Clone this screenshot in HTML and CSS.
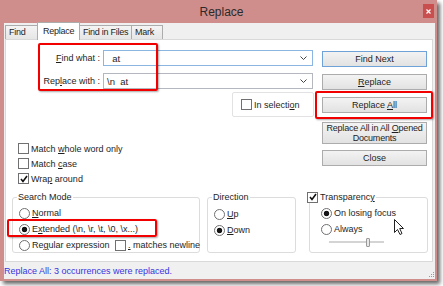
FILE: index.html
```html
<!DOCTYPE html>
<html lang="en">
<head>
    <meta charset="UTF-8">
    <meta name="viewport" content="width=device-width, initial-scale=1.0">
    <title>Replace</title>
    <link rel="stylesheet" href="styles.css">
</head>
<body>
    <div class="screen">
        <div class="window">
            <div class="titlebar">
                <span></span>
                <span class="title">Replace</span>
                <span class="close">
                    <svg width="5" height="5" viewBox="0 0 5 5"><path d="M0.5 0.5 L4.5 4.5 M4.5 0.5 L0.5 4.5" stroke="#fff" stroke-width="1.2"/></svg>
                </span>
            </div>

            <div class="client">
                <div class="tabs">
                    <div class="tab tab-find">Find</div>
                    <div class="tab tab-replace active">Replace</div>
                    <div class="tab tab-files">Find in Files</div>
                    <div class="tab tab-mark">Mark</div>
                </div>

                <div class="page">
                    <div class="top">
                        <div class="left">
                            <div class="fields">
                                <label class="field-label"><u>F</u>ind what :</label>
                                <div class="combo focused">
                                    <span class="combo-text">  at</span>
                                    <svg width="7" height="4" viewBox="0 0 7 4"><path d="M0.5 0.5 L3.5 3.5 L6.5 0.5" stroke="#444" fill="none"/></svg>
                                </div>
                                <label class="field-label">Rep<u>l</u>ace with :</label>
                                <div class="combo">
                                    <span class="combo-text">\n  at</span>
                                    <svg width="7" height="4" viewBox="0 0 7 4"><path d="M0.5 0.5 L3.5 3.5 L6.5 0.5" stroke="#444" fill="none"/></svg>
                                </div>
                            </div>

                            <div class="selbox">
                                <div class="opt">
                                    <span class="box"></span>
                                    <span>In selecti<u>o</u>n</span>
                                </div>
                            </div>

                            <div class="options">
                                <div class="opt">
                                    <span class="box"></span>
                                    <span>Match <u>w</u>hole word only</span>
                                </div>
                                <div class="opt">
                                    <span class="box"></span>
                                    <span>Match <u>c</u>ase</span>
                                </div>
                                <div class="opt">
                                    <span class="box"><svg width="8" height="8" viewBox="0 0 8 8"><path d="M1 4 L3 6.5 L7 1" stroke="#111" stroke-width="1.6" fill="none"/></svg></span>
                                    <span>Wra<u>p</u> around</span>
                                </div>
                            </div>
                        </div>

                        <div class="buttons">
                            <div class="btn default">Find Next</div>
                            <div class="btn"><span><u>R</u>eplace</span></div>
                            <div class="btn"><span>Replace <u>A</u>ll</span></div>
                            <div class="btn tall"><span>Replace All in All <u>O</u>pened<br>Documents</span></div>
                            <div class="btn">Close</div>
                        </div>
                    </div>

                    <div class="groups">
                        <fieldset class="group search-mode">
                            <legend>Search Mode</legend>
                            <div class="opt">
                                <span class="radio"></span>
                                <span><u>N</u>ormal</span>
                            </div>
                            <div class="opt">
                                <span class="radio on"></span>
                                <span>E<u>x</u>tended (\n, \r, \t, \0, \x...)</span>
                            </div>
                            <div class="opt-split">
                                <div class="opt">
                                    <span class="radio"></span>
                                    <span>Re<u>g</u>ular expression</span>
                                </div>
                                <div class="opt">
                                    <span class="box"></span>
                                    <span><u>.</u> matches newline</span>
                                </div>
                            </div>
                        </fieldset>

                        <fieldset class="group direction">
                            <legend>Direction</legend>
                            <div class="opt">
                                <span class="radio"></span>
                                <span><u>U</u>p</span>
                            </div>
                            <div class="opt">
                                <span class="radio on"></span>
                                <span><u>D</u>own</span>
                            </div>
                        </fieldset>

                        <fieldset class="group transparency">
                            <legend>
                                <span class="box"><svg width="8" height="8" viewBox="0 0 8 8"><path d="M1 4 L3 6.5 L7 1" stroke="#111" stroke-width="1.6" fill="none"/></svg></span>
                                <span>Transparenc<u>y</u></span>
                            </legend>
                            <div class="opt">
                                <span class="radio on"></span>
                                <span>On losing focus</span>
                            </div>
                            <div class="opt">
                                <span class="radio"></span>
                                <span>Always</span>
                            </div>
                            <div class="slider"><span class="thumb"></span></div>
                        </fieldset>
                    </div>
                </div>

                <div class="status">
                    <span>Replace All: 3 occurrences were replaced.</span>
                    <svg class="grip" width="7" height="7" viewBox="0 0 7 7">
                        <rect x="5" y="1" width="1" height="1" fill="#999"/>
                        <rect x="3" y="3" width="1" height="1" fill="#999"/>
                        <rect x="5" y="3" width="1" height="1" fill="#999"/>
                        <rect x="1" y="5" width="1" height="1" fill="#999"/>
                        <rect x="3" y="5" width="1" height="1" fill="#999"/>
                        <rect x="5" y="5" width="1" height="1" fill="#999"/>
                    </svg>
                </div>
            </div>
        </div>

        <!-- annotations drawn over the screenshot -->
        <div class="mark mark-fields"></div>
        <div class="mark mark-replace-all"></div>
        <div class="mark mark-extended"></div>

        <svg class="cursor" width="11" height="17" viewBox="0 0 11 17">
            <path d="M0.5 0.5 L0.5 13.5 L3.5 10.5 L6 15.5 L8 14.5 L5.7 9.5 L9.5 9.5 Z" fill="#fff" stroke="#222" stroke-width="1" stroke-linejoin="round"/>
        </svg>
    </div>
</body>
</html>
```

FILE: styles.css
```css
* {
    box-sizing: border-box;
}

body {
    margin: 0;
    background-color: #ffffff;
    font-family: "Liberation Sans", Arial, sans-serif;
    font-size: 9px;
    color: #1e1e1e;
}

u {
    text-underline-offset: 1px;
}

.screen {
    width: 443px;
    height: 286px;
    position: relative;
    overflow: hidden;
}

.window {
    width: 437px;
    height: 281px;
    background-color: #cf8e8c;
    display: flex;
    flex-direction: column;
    box-shadow: 3px 3px 4px rgba(0, 0, 0, 0.6);
}

.titlebar {
    height: 23px;
    display: grid;
    grid-template-columns: 1fr auto 1fr;
    align-items: center;
    padding-left: 6px;
}
.title {
    font-size: 12px;
    color: #2a2a2a;
}
.close {
    justify-self: end;
    align-self: start;
    margin: 4px 3px 0 0;
    width: 11px;
    height: 14px;
    background-color: #c94f4f;
    display: flex;
    align-items: center;
    justify-content: center;
}

.client {
    flex: 1;
    margin: 0 2px 2px 4px;
    background-color: #f0f0f0;
    display: flex;
    flex-direction: column;
}

.tabs {
    height: 16px;
    display: flex;
    align-items: flex-end;
    padding-left: 1px;
}
.tab {
    height: 14px;
    border: 1px solid #acacac;
    border-bottom: none;
    background: linear-gradient(#f4f4f4, #e6e6e6);
    padding-left: 3px;
    line-height: 13px;
    margin-left: -1px;
    white-space: nowrap;
    letter-spacing: -0.25px;
}
.tab:first-child {
    margin-left: 0;
}
.tab.active {
    height: 18px;
    margin-bottom: -1px;
    background: #ffffff;
    position: relative;
    z-index: 1;
    padding-left: 5px;
    line-height: 17px;
}
.tab-find { width: 33px; }
.tab-replace { width: 43px; }
.tab-files { width: 53px; }
.tab-mark { width: 32px; }

.page {
    flex: 1;
    margin: 0 2px 0 1px;
    background-color: #ffffff;
    border: 1px solid #d9d9d9;
    display: flex;
    flex-direction: column;
}

.top {
    height: 151px;
    display: flex;
    gap: 9px;
}
.left {
    width: 307px;
}

.fields {
    margin-top: 10px;
    display: grid;
    grid-template-columns: 94px 210px;
    grid-auto-rows: 16px;
    column-gap: 3px;
    row-gap: 7px;
    align-items: center;
}
.field-label {
    text-align: right;
}
.combo {
    height: 16px;
    border: 1px solid #b4b7bd;
    display: flex;
    align-items: center;
    justify-content: space-between;
    padding: 0 5px 0 3px;
}
.combo.focused {
    border-color: #8cb6e2;
}
.combo-text {
    white-space: pre;
    font-size: 9.5px;
}

.selbox {
    margin: 3px 0 0 226px;
    width: 82px;
    height: 25px;
    border: 1px solid #e2e2e2;
    border-radius: 2px;
    display: flex;
    align-items: center;
    padding-left: 8px;
}

.options {
    margin-top: 24px;
    padding-left: 12px;
}
.options .opt {
    height: 15px;
}

.opt {
    display: flex;
    align-items: center;
    gap: 2px;
    height: 16px;
    white-space: nowrap;
}
.box {
    width: 11px;
    height: 11px;
    flex: none;
    border: 1px solid #707070;
    background-color: #ffffff;
    display: flex;
    align-items: center;
    justify-content: center;
}
.radio {
    width: 11px;
    height: 11px;
    flex: none;
    border: 1px solid #707070;
    border-radius: 50%;
    background-color: #ffffff;
}
.radio.on {
    background: radial-gradient(circle, #151515 0 2.4px, #ffffff 3.1px);
}

.buttons {
    width: 105px;
    display: flex;
    flex-direction: column;
    padding-top: 11px;
}
.btn {
    height: 16px;
    margin-bottom: 7px;
    border: 1px solid #acacac;
    background: linear-gradient(#f3f3f3, #e2e2e2);
    display: flex;
    align-items: center;
    justify-content: center;
    text-align: center;
    line-height: 10px;
    white-space: nowrap;
}
.btn.default {
    border-color: #6fa3d8;
}
.btn.tall {
    height: 22px;
    margin-top: 2px;
    margin-bottom: 6px;
    letter-spacing: -0.2px;
}

.groups {
    display: flex;
    align-items: flex-start;
}
.group {
    margin: 0;
    min-width: 0;
    height: 62px;
    padding: 2px 4px 0 6px;
    border: 1px solid #dcdcdc;
    border-radius: 3px;
}
.group legend {
    padding: 0 1px;
    margin-left: -2px;
    line-height: 12px;
}
.search-mode {
    margin-left: 6px;
    width: 188px;
}
.direction {
    margin-left: 7px;
    width: 89px;
    padding-top: 3px;
}
.transparency {
    margin-left: 13px;
    width: 119px;
    padding-left: 11px;
}
.transparency legend {
    margin-left: -15px;
    display: flex;
    align-items: center;
    gap: 2px;
}

.opt-split {
    display: grid;
    grid-template-columns: 96px auto;
}

.slider {
    margin: 1px 0 0 8px;
    width: 55px;
    height: 9px;
    display: flex;
    align-items: center;
    background: linear-gradient(transparent 3px, #d4d4d4 3px, #d4d4d4 5px, transparent 5px);
}
.thumb {
    margin-left: 37px;
    width: 4px;
    height: 9px;
    background-color: #e8e8e8;
    border: 1px solid #9a9a9a;
    border-radius: 1px;
}

.status {
    height: 17px;
    display: flex;
    align-items: center;
    justify-content: space-between;
    color: #3535e0;
}
.grip {
    align-self: flex-end;
    margin-bottom: 1px;
}

.mark {
    position: absolute;
    border: 2px solid #f20000;
    border-radius: 2px;
    box-shadow: 1px 1px 2px rgba(0, 0, 0, 0.35);
}
.mark-fields {
    left: 38px;
    top: 43px;
    width: 120px;
    height: 48px;
}
.mark-replace-all {
    left: 315px;
    top: 91px;
    width: 118px;
    height: 28px;
}
.mark-extended {
    left: 7px;
    top: 219px;
    width: 150px;
    height: 18px;
}

.cursor {
    position: absolute;
    left: 394px;
    top: 219px;
}
```
